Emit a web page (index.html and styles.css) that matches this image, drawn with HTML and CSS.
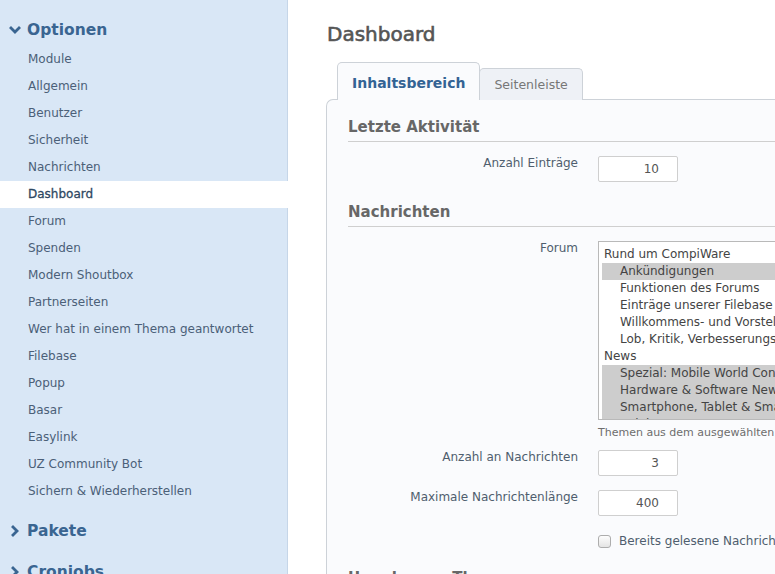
FILE: index.html
```html
<!DOCTYPE html>
<html lang="de">
<head>
<meta charset="utf-8">
<title>Dashboard – Optionen</title>
<link rel="stylesheet" href="styles.css">
</head>
<body>
<div class="layout">
  <aside class="sidebar">
    <section class="menu-section">
      <h2 class="menu-title">
        <svg class="chev" width="12" height="12" viewBox="0 0 12 12"><polyline points="2,4 6,8 10,4" /></svg>
        Optionen
      </h2>
      <ul class="menu-list">
        <li>Module</li>
        <li>Allgemein</li>
        <li>Benutzer</li>
        <li>Sicherheit</li>
        <li>Nachrichten</li>
        <li class="active">Dashboard</li>
        <li>Forum</li>
        <li>Spenden</li>
        <li>Modern Shoutbox</li>
        <li>Partnerseiten</li>
        <li>Wer hat in einem Thema geantwortet</li>
        <li>Filebase</li>
        <li>Popup</li>
        <li>Basar</li>
        <li>Easylink</li>
        <li>UZ Community Bot</li>
        <li>Sichern &amp; Wiederherstellen</li>
      </ul>
    </section>
    <section class="menu-section">
      <h2 class="menu-title">
        <svg class="chev" width="12" height="12" viewBox="0 0 12 12"><polyline points="4,2 8,6 4,10" /></svg>
        Pakete
      </h2>
    </section>
    <section class="menu-section">
      <h2 class="menu-title">
        <svg class="chev" width="12" height="12" viewBox="0 0 12 12"><polyline points="4,2 8,6 4,10" /></svg>
        Cronjobs
      </h2>
    </section>
  </aside>

  <main class="content">
    <h1 class="page-title">Dashboard</h1>

    <div class="tabs">
      <div class="tab tab-active">Inhaltsbereich</div>
      <div class="tab">Seitenleiste</div>
    </div>

    <div class="panel">
      <h3 class="section-title">Letzte Aktivität</h3>
      <div class="row">
        <label class="row-label">Anzahl Einträge</label>
        <div class="row-field"><div class="num-input">10</div></div>
      </div>

      <h3 class="section-title spaced">Nachrichten</h3>
      <div class="row">
        <label class="row-label">Forum</label>
        <div class="row-field">
          <div class="listbox" role="listbox">
            <div class="opt">Rund um CompiWare</div>
            <div class="opt child sel">Ankündigungen</div>
            <div class="opt child">Funktionen des Forums</div>
            <div class="opt child">Einträge unserer Filebase</div>
            <div class="opt child">Willkommens- und Vorstellungsbereich</div>
            <div class="opt child">Lob, Kritik, Verbesserungsvorschläge</div>
            <div class="opt">News</div>
            <div class="opt child sel">Spezial: Mobile World Congress</div>
            <div class="opt child sel">Hardware &amp; Software News</div>
            <div class="opt child sel">Smartphone, Tablet &amp; Smartwatch</div>
            <div class="opt child sel">Spiele</div>
          </div>
          <p class="help">Themen aus dem ausgewählten Forum werden angezeigt.</p>
        </div>
      </div>
      <div class="row after-list">
        <label class="row-label">Anzahl an Nachrichten</label>
        <div class="row-field"><div class="num-input">3</div></div>
      </div>
      <div class="row">
        <label class="row-label">Maximale Nachrichtenlänge</label>
        <div class="row-field"><div class="num-input">400</div></div>
      </div>
      <div class="row check-row">
        <div class="row-label"></div>
        <div class="row-field">
          <label class="check"><span class="box"></span>Bereits gelesene Nachrichten ausblenden</label>
        </div>
      </div>

      <h3 class="section-title spaced last">Ungelesene Themen</h3>
    </div>
  </main>
</div>
</body>
</html>
```

FILE: styles.css
```css
* { box-sizing: border-box; }

html, body {
  margin: 0;
  padding: 0;
  background: #fff;
  font-family: "DejaVu Sans", Verdana, sans-serif;
  font-size: 12px;
}

.layout {
  display: flex;
  height: 574px;
  overflow: hidden;
}

/* ---- sidebar ---- */
.sidebar {
  flex: 0 0 288px;
  background: #d9e7f6;
  border-right: 1px solid #c6d6e8;
  padding-top: 5px;
}

.menu-section { margin-top: 10px; }
.menu-section + .menu-section { margin-top: 11px; }

.menu-title {
  display: flex;
  align-items: center;
  gap: 6px;
  margin: 0;
  padding-left: 9px;
  height: 30px;
  font-size: 15.5px;
  font-weight: bold;
  color: #3a6591;
}

.chev {
  flex: 0 0 12px;
  fill: none;
  stroke: #3a6591;
  stroke-width: 2.8;
  stroke-linecap: square;
}

.menu-list {
  list-style: none;
  margin: 0;
  padding: 1px 0 0;
}

.menu-list li {
  height: 27px;
  line-height: 27px;
  padding-left: 28px;
  color: #4b6078;
  font-size: 12px;
  white-space: nowrap;
}

.menu-list li.active {
  background: #fff;
  margin-right: -1px;
  color: #2e4862;
  -webkit-text-stroke: 0.3px #2e4862;
}

/* ---- main ---- */
.content {
  flex: 1;
  min-width: 0;
  padding: 0 0 0 38px;
}

.page-title {
  margin: 21px 0 0 1px;
  font-size: 20px;
  line-height: 26px;
  font-weight: normal;
  color: #555;
  -webkit-text-stroke: 0.6px #555;
}

.tabs {
  display: flex;
  align-items: flex-end;
  margin: 16px 0 -1px 11px;
  height: 37px;
  position: relative;
  z-index: 1;
}

.tab {
  height: 32px;
  padding: 0 14px;
  line-height: 32px;
  border: 1px solid #cdd2d8;
  border-bottom: none;
  border-radius: 5px 5px 0 0;
  background: #eef1f6;
  color: #777;
  font-size: 12.5px;
  margin-left: -1px;
}

.tab-active {
  height: 38px;
  line-height: 40px;
  padding: 0 14px;
  background: #fafbfd;
  color: #336394;
  font-weight: bold;
  font-size: 14px;
  margin-left: 0;
}

.panel {
  background: #fafbfd;
  border: 1px solid #cdd2d8;
  border-right: none;
  border-radius: 7px 0 0 0;
  padding: 15px 0 0 21px;
  height: 600px;
}

.section-title {
  margin: 0;
  height: 27px;
  line-height: 24px;
  font-size: 15px;
  font-weight: bold;
  color: #676767;
  border-bottom: 1px solid #cfcfcf;
}

.section-title.spaced { margin-top: 18px; }
.section-title.last { margin-top: 16px; }

.row {
  display: flex;
  margin-top: 14px;
}

.row + .row { margin-top: 14px; }
.row.after-list { margin-top: 10px; }

.row-label {
  flex: 0 0 230px;
  text-align: right;
  line-height: 15px;
  color: #4f5e6e;
}

.row-field {
  margin-left: 20px;
  flex: 1;
  min-width: 0;
}

.num-input {
  width: 80px;
  height: 26px;
  line-height: 25px;
  border: 1px solid #cfcfcf;
  border-radius: 2px;
  background: #fff;
  text-align: right;
  padding-right: 18px;
  color: #555;
}

.listbox {
  width: 320px;
  height: 179px;
  border: 1px solid #b9b9b9;
  background: #fff;
  padding: 4px 0 0 3px;
  overflow: hidden;
  color: #444;
  font-size: 12px;
}

.opt {
  height: 17px;
  line-height: 17px;
  padding-left: 2px;
  white-space: nowrap;
}

.opt.child { padding-left: 18px; }
.opt.sel { background: #cdcdcd; }

.help {
  margin: 6px 0 0;
  font-size: 11px;
  line-height: 14px;
  color: #6d6d6d;
  white-space: nowrap;
}

.row.check-row { margin-top: 16px; }

.check {
  display: flex;
  align-items: center;
  gap: 8px;
  height: 18px;
  color: #4f5e6e;
  white-space: nowrap;
}

.box {
  flex: 0 0 13px;
  width: 13px;
  height: 13px;
  border: 1px solid #adadad;
  border-radius: 3px;
  background: linear-gradient(#fdfdfd, #e4e4e4);
}
```
